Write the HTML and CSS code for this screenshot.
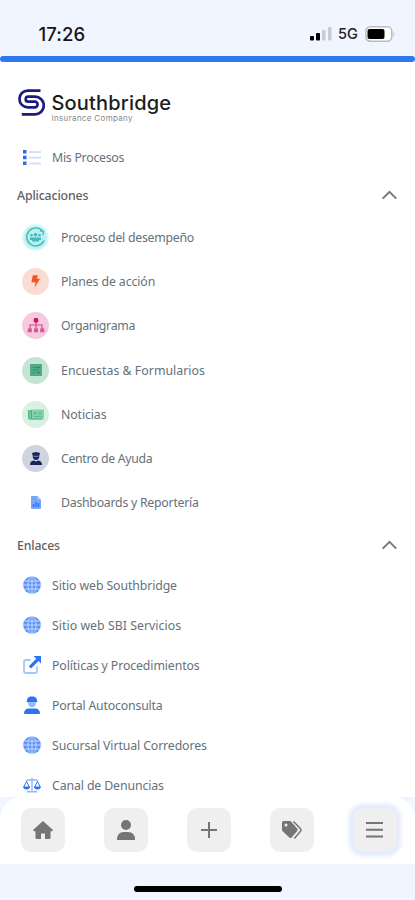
FILE: index.html
```html
<!DOCTYPE html>
<html lang="es">
<head>
<meta charset="utf-8">
<meta name="viewport" content="width=device-width, initial-scale=1">
<title>Southbridge</title>
<link rel="stylesheet" href="styles.css">
</head>
<body>
<svg width="0" height="0" class="defs">
  <symbol id="globe" viewBox="0 0 18 18">
    <circle cx="9" cy="9" r="8.8" fill="#5d94f8"/>
    <g fill="none" stroke="#c6dafd" stroke-width="1"><ellipse cx="9" cy="9" rx="4" ry="8.8"/><path d="M9 0v18M0 9h18M1.5 5h15M1.5 13h15"/></g>
  </symbol>
  <symbol id="chevron" viewBox="0 0 16 10"><path d="M1.2 8.6 8 1.8l6.8 6.8" fill="none" stroke="#777" stroke-width="2"/></symbol>
</svg>
<header class="status">
  <span class="time">17:26</span>
  <div class="signals">
    <svg width="22" height="14" viewBox="0 0 22 14"><rect x="0" y="9" width="4" height="4.5" rx="1"/><rect x="6" y="6" width="4" height="7.5" rx="1"/><rect x="12" y="3" width="3.5" height="10.5" rx="1" fill="#c9ccd3"/><rect x="18" y="0" width="3.5" height="13.5" rx="1" fill="#c9ccd3"/></svg>
    <span class="net">5G</span>
    <svg width="30" height="16" viewBox="0 0 30 16"><rect x=".8" y=".8" width="26" height="14.4" rx="4.5" fill="#fff" stroke="#b9bcc2" stroke-width="1.5"/><rect x="2.5" y="3" width="17" height="10" rx="2"/><path d="M28.4 5.5q2 2.5 0 5z" fill="#b9bcc2"/></svg>
  </div>
</header>
<div class="progress"></div>
<main>
  <div class="logo">
    <svg width="27" height="27" viewBox="0 0 27 27"><path d="M22.5 1.6H9.8a8.35 8.35 0 0 0 0 16.7H16.8a2.8 2.8 0 0 0 0-5.6H10.2a2.5 2.5 0 0 1 0-5H17a8.8 8.8 0 0 1 0 17.6H3.8" fill="none" stroke="#1d1b80" stroke-width="2.7"/></svg>
    <div class="brand"><strong>Southbridge</strong><small>Insurance Company</small></div>
  </div>
  <a class="link"><svg width="18" height="15" viewBox="0 0 18 15"><path d="M0 0h3.5v3.5H0zM0 5.7h3.5v3.5H0zM0 11.4h3.5v3.5H0z" fill="#2c6cf0"/><path d="M6 1h12v2H6zM6 6.7h12v2H6zM6 12.4h12v2H6z" fill="#d5e1fc"/></svg><span class="tight">Mis Procesos</span></a>
  <div class="section"><span>Aplicaciones</span><svg width="17" height="10"><use href="#chevron"/></svg></div>
  <div class="apps">
    <a class="app"><i class="dot teal"><svg width="21" height="21" viewBox="0 0 21 21"><path d="M17.7 4.2A9 9 0 1 0 19 13.5M15 3.6l3.5 1-.5 3.4" fill="none" stroke="#43b9bd" stroke-width="1.4"/><g fill="#43b9bd"><circle cx="10.5" cy="7.7" r="1.8"/><circle cx="6.5" cy="8.3" r="1.3"/><circle cx="14.500" cy="8.3" r="1.3"/><path d="M5 13v-2.500h11V13zM7 14.500q0-4 3.500-4t3.500 4z"/></g></svg></i><span class="tight">Proceso del desempeño</span></a>
    <a class="app"><i class="dot orange"><svg width="9" height="13" viewBox="0 0 10 14"><path d="M2 0h5.5L6.6 4H10L4 14 5 7.8H.5z" fill="#f2551f"/></svg></i><span>Planes de acción</span></a>
    <a class="app"><i class="dot pink"><svg width="18" height="15" viewBox="0 0 18 15"><path d="M9 3v8M3 11V7h12v4" fill="none" stroke="#d94a8f" stroke-width="1.2"/><rect x="6.8" y="0" width="4.4" height="4.6" rx="1.4" fill="#c8156c"/><path d="M.8 10.5h4v3.8h-4zM7 10.5h4v3.8H7zM13.2 10.5h4v3.8h-4z" fill="#db5396"/></svg></i><span class="tighter">Organigrama</span></a>
    <a class="app"><i class="dot green"><svg width="12" height="12" viewBox="0 0 12 12"><rect width="12" height="12" rx="1" fill="#4eaa82"/><path d="M3 3.5h1.5M6 3.5h4M3 6h1.5M6 6h2M3 8.5h1.5M7 8.5h3" stroke="#2e8763"/></svg></i><span class="wide">Encuestas &amp; Formularios</span></a>
    <a class="app"><i class="dot mint"><svg width="16" height="11" viewBox="0 0 16 11"><path d="M0 1h3v9.5H1.5Q0 10.5 0 9zM3 .5h13V9q0 1.5-1.5 1.5H3z" fill="#8bd0ac"/><path d="M.8 1.2v7.3q0 1.5 2 1.5H14M3.4 1v8" fill="none" stroke="#42b27c" stroke-width="1.2"/><path d="M5.5 3h3v2.5h-3zM10 3h4v1h-4zM10 5h4v1h-4zM5.500 7H14v1H5.500z" fill="#63bc91"/></svg></i><span>Noticias</span></a>
    <a class="app"><i class="dot gray"><svg width="12" height="13" viewBox="0 0 12 13"><path d="M2 1 6 0l4 1-.8 3v1.500Q8.500 8 6 8T2.800 5.500V4zM0 13q0-4 3.8-4.400L6 9.500l2.200-.9Q12 9 12 13z" fill="#18265e"/><path d="M3.700 3.800h4.600v1H3.700z" fill="#8b94b2"/></svg></i><span class="tighter">Centro de Ayuda</span></a>
    <a class="app"><i class="dot"><svg width="10" height="13" viewBox="0 0 10 13"><path d="M1 0h5.500L10 3.500V12q0 1-1 1H1q-1 0-1-1V1q0-1 1-1z" fill="#76a5fa"/><path d="M6.500 0v3.500H10z" fill="#b9d0fd"/><path d="M2.500 11V8M5 11V6M7.500 11V7" stroke="#316fec" stroke-width="1.300"/></svg></i><span class="tight">Dashboards y Reportería</span></a>
  </div>
  <div class="section second"><span>Enlaces</span><svg width="17" height="10"><use href="#chevron"/></svg></div>
  <a class="link"><svg width="18" height="18"><use href="#globe"/></svg><span>Sitio web Southbridge</span></a>
  <a class="link"><svg width="18" height="18"><use href="#globe"/></svg><span class="wide">Sitio web SBI Servicios</span></a>
  <a class="link"><svg width="18" height="18" viewBox="0 0 18 18"><path d="M7.5 4H3Q1 4 1 6v9q0 2 2 2h9q2 0 2-2v-4.5" fill="none" stroke="#a7c5fc" stroke-width="1.8"/><path d="M10.5 0H18v7.5L15.5 5 8 12.5 5.8 10.3 13.2 2.8z" fill="#2f73f3"/></svg><span>Políticas y Procedimientos</span></a>
  <a class="link"><svg width="18" height="18" viewBox="0 0 18 18"><path d="M3.8 5q.4-3.8 3.6-4.5h3.2q3.2.7 3.6 4.5v1.2H3.8zM1 18q0-5.5 5-5.5h6q5 0 5 5.500z" fill="#2f73f3"/><path d="M5 6.200h8q0 5-4 5t-4-5z" fill="#96bafb"/></svg><span class="snug">Portal Autoconsulta</span></a>
  <a class="link"><svg width="18" height="18"><use href="#globe"/></svg><span>Sucursal Virtual Corredores</span></a>
  <a class="link"><svg width="18" height="15" viewBox="0 0 18 15"><path d="M9 0v14M3 2.500 9 1.500l6 1M4 13.800h10" fill="none" stroke="#8fb6fb" stroke-width="1.400"/><path d="M3.500 3.500.800 9M3.500 3.500 6.400 9M14.500 3.500 11.600 9M14.500 3.500 17.200 9" fill="none" stroke="#2f73f3" stroke-width="1"/><path d="M0 8.500h7.200q-.4 3-3.600 3T0 8.500zM10.800 8.500H18q-.4 3-3.600 3t-3.600-3z" fill="#2f73f3"/></svg><span>Canal de Denuncias</span></a>
</main>
<div class="dock">
  <nav>
    <a class="tab"><svg width="20" height="18" viewBox="0 0 20 18"><path d="M10 0 20 9l-1 1.300h-1.500V17q0 1-1 1H12v-5.500H8V18H3.500q-1 0-1-1v-6.700H1L0 9z"/></svg></a>
    <a class="tab"><svg width="18" height="20" viewBox="0 0 18 20"><circle cx="9" cy="5" r="5"/><path d="M0 20q0-8 7-8h4q7 0 7 8z"/></svg></a>
    <a class="tab"><svg width="16" height="16" viewBox="0 0 16 16"><path d="M7 0h2v7h7v2H9v7H7V9H0V7h7z"/></svg></a>
    <a class="tab"><svg width="20" height="18" viewBox="0 0 20 18"><path d="M1.500 0h7l6.700 7.500q1 1.200 0 2.400l-5.500 6.500q-1.200 1-2.400 0L.7 10.200Q0 9.500 0 8.500v-7Q0 0 1.500 0zM4 2.500a1.500 1.500 0 1 0 0 3 1.500 1.500 0 0 0 0-3z" fill-rule="evenodd"/><path d="m11.500.5 6.800 7q1.300 1.500 0 3l-6 7" fill="none" stroke="#757575" stroke-width="1.500"/></svg></a>
    <a class="tab active"><svg width="17" height="16" viewBox="0 0 17 16"><path d="M0 0h17v2H0zM0 6.800h17v2H0zM0 13.500h17v2H0z"/></svg></a>
  </nav>
</div>
<footer><div class="home"></div></footer>
</body>
</html>
```
FILE: styles.css
```css
* { box-sizing: border-box; }
body { margin: 0; height: 900px; overflow: hidden; display: flex; flex-direction: column; background: #fff; font-family: "Noto Sans", sans-serif; color: #65717a; }
.defs { display: none; }
svg { flex: none; display: block; }
.status { height: 56px; flex: none; background: #f1f5ff; display: flex; justify-content: space-between; padding: 11px 20px 0 38.5px; align-items: center; }
.time { font: 500 18.5px/22px Inter, sans-serif; color: #151515; letter-spacing: 0.1px; }
.signals { display: flex; align-items: center; gap: 6px; }
.net { font: 500 14.5px/18px Inter, sans-serif; color: #222; width: 21px; }
.progress { height: 6px; flex: none; background: #3278ed; border-radius: 3px; }
main { height: 735px; flex: none; overflow: hidden; display: flex; flex-direction: column; }
.logo { height: 75px; flex: none; padding: 27px 0 0 17.5px; display: flex; gap: 7px; }
.brand { display: flex; flex-direction: column; }
.brand strong { font: 500 20px/22px Inter, sans-serif; letter-spacing: 0.18px; color: #1c1c20; margin-top: 3px; }
.brand small { font: 8px/9px Inter, sans-serif; letter-spacing: 0.33px; color: #888; }
.link { height: 40px; flex: none; display: flex; align-items: center; gap: 11px; padding-left: 23px; font-size: 12.3px; letter-spacing: -0.11px; white-space: nowrap; }
.section { height: 38px; flex: none; display: flex; align-items: center; justify-content: space-between; padding: 0 17px 2px; font-size: 12.3px; letter-spacing: -0.15px; font-weight: 500; color: #626262; }
.section.second { height: 40px; padding-bottom: 0; }
.apps { display: grid; grid-template-rows: repeat(7, 44.3px); height: 310px; flex: none; }
.app { display: flex; align-items: center; gap: 12px; padding-left: 22px; font-size: 12.3px; letter-spacing: -0.1px; white-space: nowrap; }
.wide { letter-spacing: 0.04px; }
.snug { letter-spacing: -0.18px; }
.tight { letter-spacing: -0.25px; }
.tighter { letter-spacing: -0.32px; }
.dot { width: 27px; height: 27px; border-radius: 50%; display: flex; align-items: center; justify-content: center; }
.teal { background: radial-gradient(circle closest-side, #b9f0ee 75%, #e6faf9 100%); }
.orange { background: #fcdcd2; }
.pink { background: #f5c9df; }
.green { background: #c4e5d4; }
.mint { background: #d9f1e4; }
.gray { background: #d0d4de; }
.dock { background: #f1f5ff; height: 67px; flex: none; }
nav { height: 67px; background: #fff; border-radius: 22px 22px 0 0; display: flex; justify-content: space-between; padding: 11px 18.5px 0 20.5px; }
.tab { width: 44px; height: 44px; border-radius: 10px; background: #efefef; display: flex; align-items: center; justify-content: center; fill: #757575; }
.active { box-shadow: 0 0 4px 4px #e2ebfd; }
footer { height: 36px; flex: none; background: #f1f5ff; display: flex; justify-content: center; padding-top: 22px; }
.home { width: 148px; height: 6px; border-radius: 3px; background: #000; }
```
